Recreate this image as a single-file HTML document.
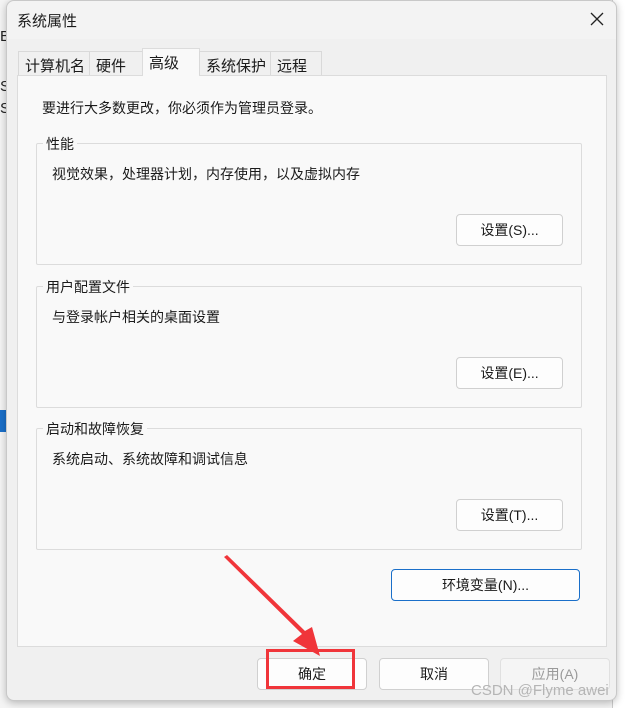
<!DOCTYPE html>
<html><head><meta charset="utf-8"><style>
*{margin:0;padding:0;box-sizing:border-box}
body{width:625px;height:708px;overflow:hidden;background:#fff;position:relative;font-family:"Liberation Sans","Noto Sans CJK SC",sans-serif;font-size:14px;color:#1a1a1a}
.abs{position:absolute}
.dlg{left:6px;top:0;width:611px;height:701px;background:#f0f0f0;border:1px solid #c8c8c8;border-radius:8px;box-shadow:0 2px 8px rgba(0,0,0,.25)}
.tb{left:0;top:0;width:100%;height:38px;background:#f3f3f3;border-radius:8px 8px 0 0}
.tab{top:50px;height:24px;background:#f0f0f0;border:1px solid #d9d9d9;border-bottom:none;font-size:15px;padding:3px 0 0 6px}
.panel{left:10px;top:74px;width:590px;height:572px;background:#f9f9f9;border:1px solid #dcdcdc}
.grp{left:29px;width:546px;height:122px;border:1px solid #dcdcdc;border-radius:2px}
.lg{position:absolute;left:6px;top:-10px;background:#f9f9f9;padding:0 3px;font-size:14px}
.btn{background:#fdfdfd;border:1px solid #d0d0d0;border-radius:4px;text-align:center;font-size:14px;line-height:30px;height:32px}
.bg{font-size:15px;color:#222}
</style></head><body>
<div class="abs" style="left:0;top:0;width:625px;height:708px;background:#f4f4f4"></div>
<div class="abs bg" style="left:0;top:28px">B.</div>
<div class="abs bg" style="left:0;top:78px">S</div>
<div class="abs bg" style="left:0;top:100px">S</div>
<div class="abs" style="left:0;top:410px;width:8px;height:22px;background:#1a6fc9"></div>
<div class="abs" style="left:612px;top:0;width:13px;height:708px;background:#fff;border-left:1px solid #ccc"></div>
<div class="dlg abs">
 <div class="tb abs"></div>
 <div class="abs" style="left:10px;top:9px;font-size:15px">系统属性</div>
 <svg class="abs" style="left:583px;top:11px" width="14" height="14"><path d="M1 1L13 13M13 1L1 13" stroke="#222" stroke-width="1.3"/></svg>
 <div class="panel abs"></div>
 <div class="tab abs" style="left:11px;width:72px">计算机名</div>
 <div class="tab abs" style="left:82px;width:54px">硬件</div>
 <div class="tab abs" style="left:135px;top:47px;height:28px;width:58px;background:#f9f9f9;border-color:#dcdcdc">高级</div>
 <div class="tab abs" style="left:192px;width:72px">系统保护</div>
 <div class="tab abs" style="left:263px;width:52px">远程</div>
 <div class="abs" style="left:35px;top:97px">要进行大多数更改，你必须作为管理员登录。</div>
 <div class="grp abs" style="top:142px"><span class="lg">性能</span>
  <div class="abs" style="left:15px;top:20px">视觉效果，处理器计划，内存使用，以及虚拟内存</div>
  <div class="btn abs" style="left:419px;top:70px;width:107px">设置(S)...</div></div>
 <div class="grp abs" style="top:285px"><span class="lg">用户配置文件</span>
  <div class="abs" style="left:15px;top:20px">与登录帐户相关的桌面设置</div>
  <div class="btn abs" style="left:419px;top:70px;width:107px">设置(E)...</div></div>
 <div class="grp abs" style="top:427px"><span class="lg">启动和故障恢复</span>
  <div class="abs" style="left:15px;top:20px">系统启动、系统故障和调试信息</div>
  <div class="btn abs" style="left:419px;top:70px;width:107px">设置(T)...</div></div>
 <div class="btn abs" style="left:384px;top:568px;width:189px;border-color:#1a6fc9">环境变量(N)...</div>
 <div class="btn abs" style="left:250px;top:657px;width:110px">确定</div>
 <div class="btn abs" style="left:372px;top:657px;width:110px">取消</div>
 <div class="btn abs" style="left:493px;top:657px;width:110px;color:#9a9a9a;background:#f5f5f5;border-color:#e0e0e0">应用(A)</div>
</div>
<div class="abs" style="left:266px;top:649px;width:89px;height:40px;border:3px solid #f0353a"></div>
<svg class="abs" style="left:0;top:0" width="625" height="708"><path d="M224 557L302 634L293 641L320 656L312 627L305 631L227 555Z" fill="#f0353a"/></svg>
<div class="abs" style="left:471px;top:682px;font-size:15px;color:#b5b5b5">CSDN @Flyme awei</div>
</body></html>
